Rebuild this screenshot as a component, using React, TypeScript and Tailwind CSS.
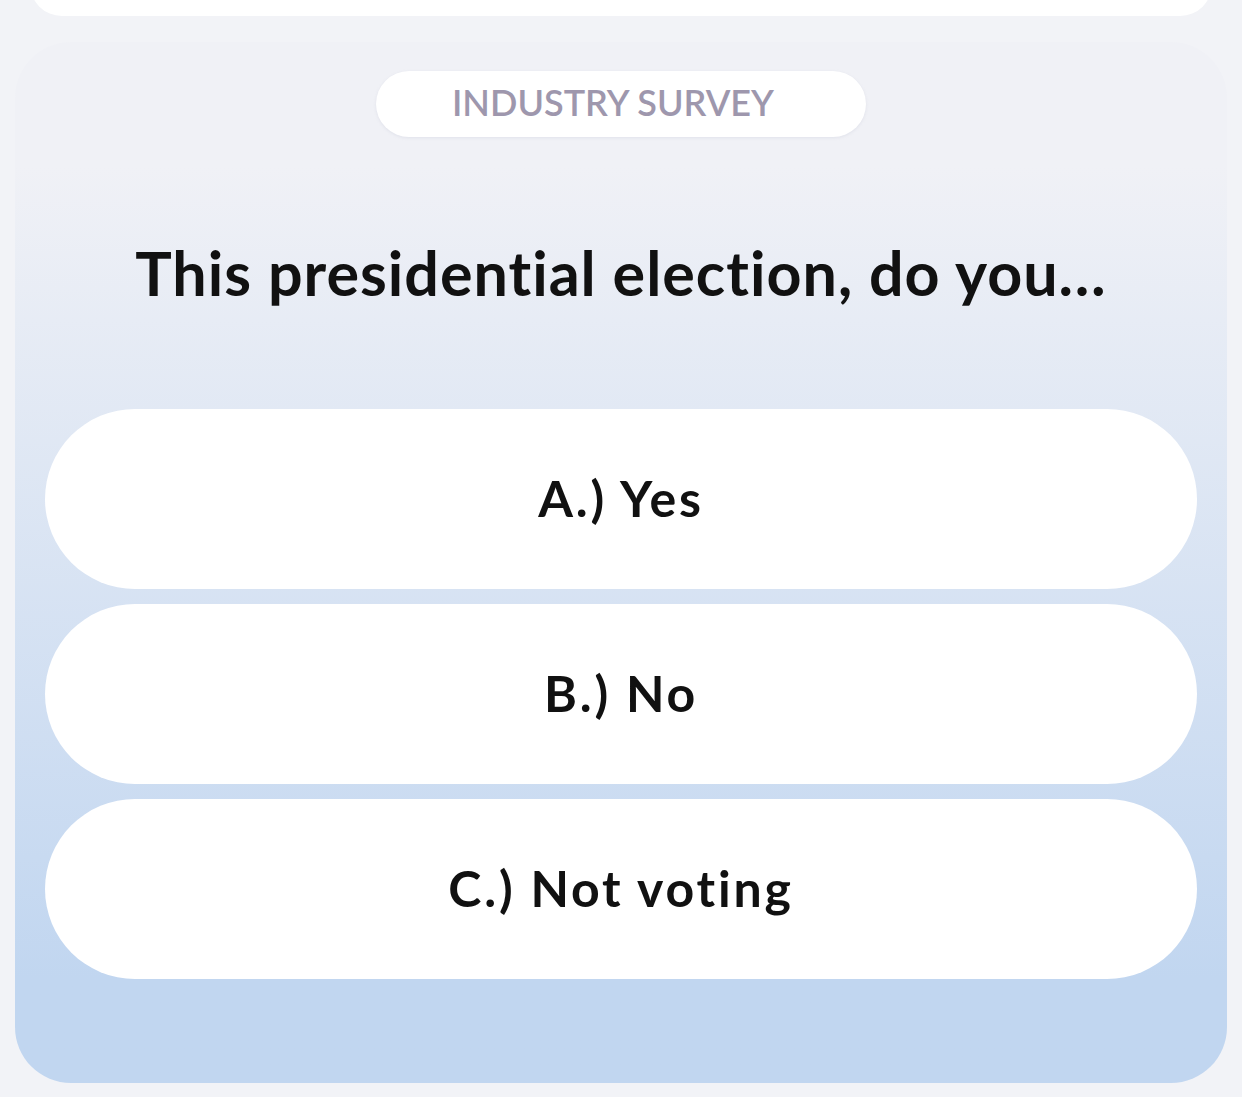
import React from "react";

export default function App() {
  const options = ["A.) Yes", "B.) No", "C.) Not voting"];
  return (
    <div
      className="w-[1242px] h-[1097px] bg-[#f2f3f7] overflow-hidden relative [font-variant-ligatures:none]"
      style={{ fontFamily: "Lato, 'Noto Sans', sans-serif" }}
    >
      <div className="mx-[30px] -mt-[40px] h-[56px] bg-white rounded-b-[32px]" />
      <div className="mx-[15px] mt-[26px] rounded-[56px] bg-gradient-to-b from-[#f0f1f6] from-[12%] to-[#c1d6f0] to-[90%] px-[30px] pt-[29px] pb-[104px]">
        <div className="flex justify-center">
          <div className="w-[490px] h-[66px] rounded-full bg-white flex items-center justify-center pr-[16px] pb-[5px] shadow-[0_1px_3px_rgba(180,185,205,0.25)]">
            <span className="text-[36px] font-semibold text-[#9e97ad] leading-none tracking-[0px]">
              INDUSTRY SURVEY
            </span>
          </div>
        </div>
        <div className="h-[272px] flex items-center justify-center pb-[2px]">
          <h1 className="text-[61px] font-bold text-[#111111] leading-none tracking-[1px]">
            This presidential election, do you…
          </h1>
        </div>
        <div className="flex flex-col gap-[15px]">
          {options.map((o) => (
            <div
              key={o}
              className="h-[180px] rounded-full bg-white flex items-center justify-center"
            >
              <span className="text-[50px] font-bold text-[#111111] leading-none tracking-[2.8px] pb-[2px]">{o}</span>
            </div>
          ))}
        </div>
      </div>
    </div>
  );
}
